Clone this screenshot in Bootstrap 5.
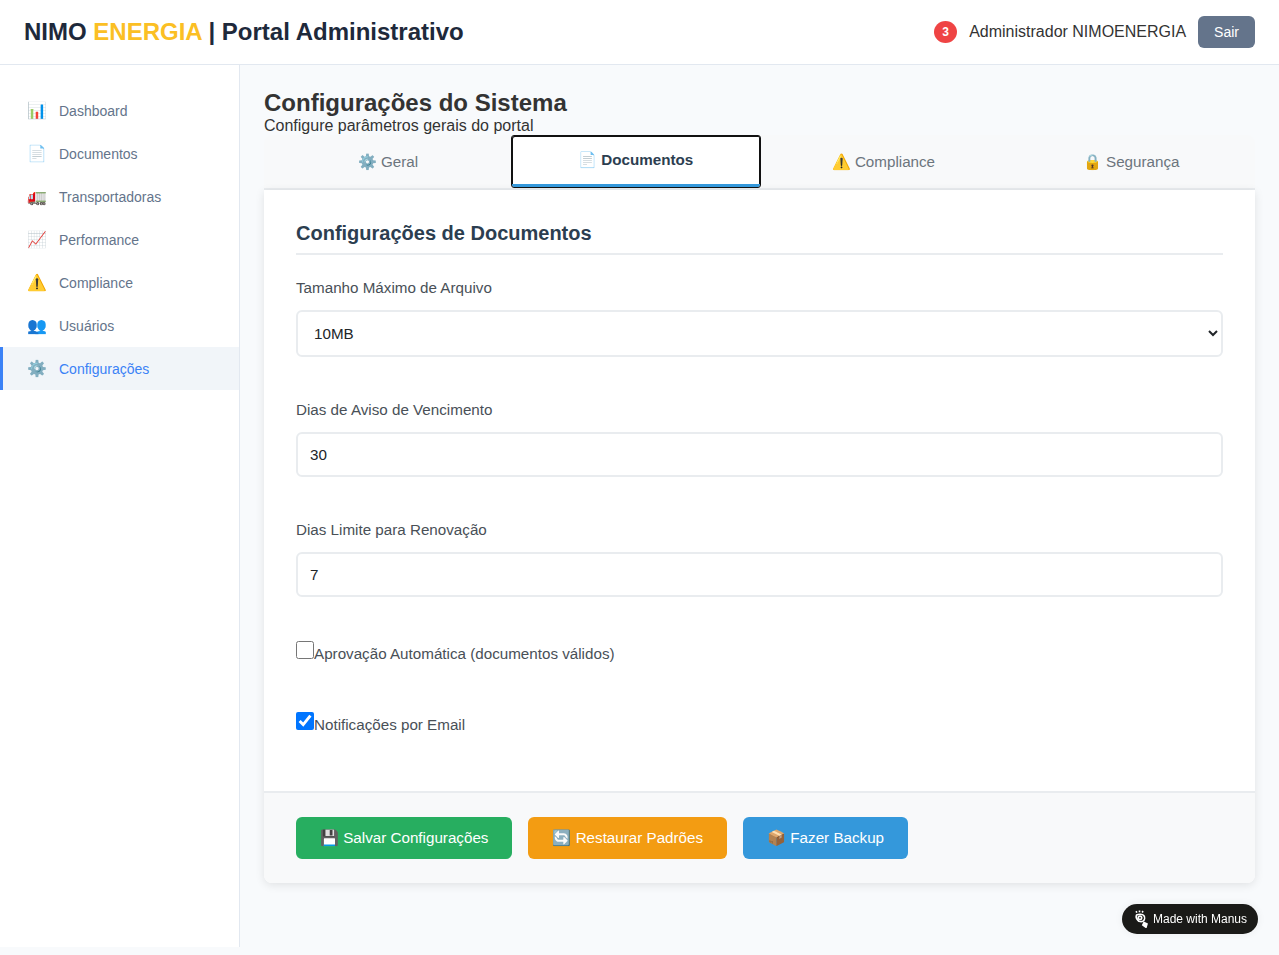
<!DOCTYPE html>
<html lang="pt-BR">
<head>
<meta charset="utf-8">
<title>Configurações do Sistema</title>
<link href="https://cdn.jsdelivr.net/npm/bootstrap@5.3.0/dist/css/bootstrap.min.css" rel="stylesheet">
<style>
html,body{height:100%}
body{font-family:"Liberation Sans",Arial,sans-serif;background:#f8fafc;color:#333;font-size:16px;line-height:normal}
.top-bar{height:65px;background:#fff;border-bottom:1px solid #e2e8f0;padding:0 24px}
.brand{font-size:24px;font-weight:700;color:#1e293b;margin:0;line-height:28px}
.brand span{color:#fbbf24}
.alert-dot{width:23px;height:22px;border-radius:50%;background:#ef4444;color:#fff;font-size:12px;font-weight:700;margin-right:12px}
.user-name{font-size:16px;color:#333;margin-right:12px}
.exit-btn{background:#64748b;color:#fff;border:0;border-radius:6px;font-size:14px;line-height:16px;padding:8px 16px}
.exit-btn:hover{background:#64748b;color:#fff}
.side{width:240px;flex:0 0 240px;height:882px;background:#fff;border-right:1px solid #e2e8f0;padding-top:24px}
.side-item{height:43px;padding:0 24px;color:#64748b;font-size:14px;text-decoration:none;border-left:3px solid transparent;gap:12px}
.side-item:hover{color:#64748b}
.side-item.on{background:#f1f5f9;color:#3b82f6;border-left-color:#3b82f6}
.side-ico{width:20px;font-size:16px;text-align:center;line-height:20px;flex:0 0 20px}
.main-area{padding:24px;min-width:0}
.page-ttl{font-size:24px;font-weight:700;color:#333;margin:0;line-height:28px}
.page-sub{font-size:16px;color:#333;margin:0;line-height:18px}
.tab-bar{background:#f8f9fa;border-bottom:2px solid #e9ecef;border-radius:8px 8px 0 0;height:55px}
.tab-x{flex:1 1 0;background:transparent;border:0;padding:0 24px;font-size:15.2px;color:#6c757d;height:53px;text-align:center}
.tab-x.on{background:#fff;color:#2c3e50;font-weight:700;border-bottom:3px solid #3498db;outline:1px solid #111;box-shadow:inset 1px 1px 0 #111,inset -1px 0 0 #111;border-radius:2px;margin-top:1px;height:51px;align-self:flex-start}
.panel-x{background:#fff;border-radius:0 0 8px 8px;box-shadow:0 2px 10px rgba(0,0,0,.1)}
.panel-body{padding:32px 32px 8px}
.sec-ttl{font-size:20px;font-weight:700;color:#2c3e50;margin:0 0 24px;padding-bottom:8px;border-bottom:2px solid #e9ecef;line-height:23px}
.fld{margin-bottom:44px}
.fld label{display:block;font-size:15.2px;color:#495057;margin-bottom:13px;line-height:18px}
.fld-in{display:block;width:100%;border:2px solid #e9ecef;border-radius:6px;padding:12px;font-size:15.2px;font-family:inherit;color:#212529;background:#fff;height:45px}
select.fld-in{height:47px;padding:12px}
.chk-row{margin-bottom:36px;font-size:15.2px;color:#495057;height:35px}
.chk-row input{width:18px;height:18px;margin:0;flex:0 0 18px}
.chk-row label{margin-top:4px;line-height:18px}
.foot-x{background:#f8f9fa;border-top:2px solid #e9ecef;padding:24px 32px;border-radius:0 0 8px 8px;gap:16px}
.act{border:0;border-radius:6px;color:#fff;font-size:15.2px;height:42px;padding:0 24px}
.act:hover{color:#fff}
.act-g{background:#27ae60}.act-g:hover{background:#27ae60}
.act-o{background:#f39c12}.act-o:hover{background:#f39c12}
.act-b{background:#3498db}.act-b:hover{background:#3498db}
.manus{position:fixed;left:1122px;top:904px;width:136px;height:30px;border-radius:15px;background:#1a1a18;color:#fff;font-size:12px;gap:4px;padding-left:12px;box-shadow:0 0 8px rgba(0,0,0,.06)}
.manus svg{flex:0 0 15px}
</style>
</head>
<body>
<header class="top-bar d-flex align-items-center justify-content-between">
  <h1 class="brand">NIMO <span>ENERGIA</span> | Portal Administrativo</h1>
  <div class="d-flex align-items-center">
    <div class="alert-dot d-flex align-items-center justify-content-center">3</div>
    <div class="user-name">Administrador NIMOENERGIA</div>
    <button class="btn exit-btn" type="button">Sair</button>
  </div>
</header>
<div class="d-flex">
  <nav class="side d-flex flex-column">
    <a class="side-item d-flex align-items-center" href="#"><span class="side-ico">📊</span>Dashboard</a>
    <a class="side-item d-flex align-items-center" href="#"><span class="side-ico">📄</span>Documentos</a>
    <a class="side-item d-flex align-items-center" href="#"><span class="side-ico">🚛</span>Transportadoras</a>
    <a class="side-item d-flex align-items-center" href="#"><span class="side-ico">📈</span>Performance</a>
    <a class="side-item d-flex align-items-center" href="#"><span class="side-ico">⚠️</span>Compliance</a>
    <a class="side-item d-flex align-items-center" href="#"><span class="side-ico">👥</span>Usuários</a>
    <a class="side-item on d-flex align-items-center" href="#"><span class="side-ico">⚙️</span>Configurações</a>
  </nav>
  <main class="main-area flex-grow-1">
    <h2 class="page-ttl">Configurações do Sistema</h2>
    <p class="page-sub">Configure parâmetros gerais do portal</p>
    <div class="tab-bar d-flex">
      <button class="tab-x" type="button">⚙️ Geral</button>
      <button class="tab-x on" type="button">📄 Documentos</button>
      <button class="tab-x" type="button">⚠️ Compliance</button>
      <button class="tab-x" type="button">🔒 Segurança</button>
    </div>
    <section class="panel-x">
      <div class="panel-body">
        <h3 class="sec-ttl">Configurações de Documentos</h3>
        <div class="fld"><label for="f1">Tamanho Máximo de Arquivo</label>
          <select id="f1" class="fld-in"><option>5MB</option><option selected>10MB</option><option>20MB</option></select></div>
        <div class="fld"><label for="f2">Dias de Aviso de Vencimento</label>
          <input id="f2" class="fld-in" type="number" value="30"></div>
        <div class="fld"><label for="f3">Dias Limite para Renovação</label>
          <input id="f3" class="fld-in" type="number" value="7"></div>
        <div class="chk-row d-flex align-items-start"><input id="c1" type="checkbox"><label for="c1">Aprovação Automática (documentos válidos)</label></div>
        <div class="chk-row d-flex align-items-start"><input id="c2" type="checkbox" checked><label for="c2">Notificações por Email</label></div>
      </div>
      <div class="foot-x d-flex">
        <button class="btn act act-g" type="button">💾 Salvar Configurações</button>
        <button class="btn act act-o" type="button">🔄 Restaurar Padrões</button>
        <button class="btn act act-b" type="button">📦 Fazer Backup</button>
      </div>
    </section>
  </main>
</div>
<div class="manus d-flex align-items-center">
  <svg width="15" height="18" viewBox="0 0 15 18" fill="none" stroke="#fff" stroke-width="1.6"><path d="M2 1.200l.9 1.400M5.500.5v1.800M9 1l-.8 1.500"/><path d="M2.500 5c2.500-1.200 6-1 7.300.6 1.200 1.600 1 4-.4 5.200-1.700 1.200-4.500 1-5.600-.6C2.600 8.800 1.800 6.400 2.500 5z"/><circle cx="6" cy="7.800" r="1.700"/><path d="M10 12.500l3 1.500-1 3.300-3.200-2.300z" fill="#fff"/></svg>
  <span>Made with Manus</span>
</div>
</body>
</html>
